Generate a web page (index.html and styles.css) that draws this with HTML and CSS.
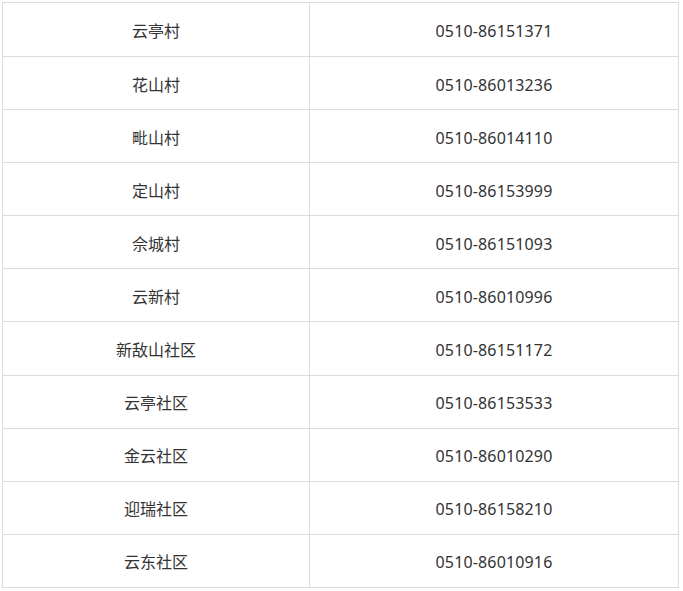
FILE: index.html
```html
<!DOCTYPE html>
<html lang="zh-CN">
<head>
<meta charset="utf-8">
<title>联系电话</title>
<link rel="stylesheet" href="styles.css">
</head>
<body>
<div class="table">
  <div class="cell">云亭村</div><div class="cell num">0510-86151371</div>
  <div class="cell">花山村</div><div class="cell num">0510-86013236</div>
  <div class="cell">毗山村</div><div class="cell num">0510-86014110</div>
  <div class="cell">定山村</div><div class="cell num">0510-86153999</div>
  <div class="cell">佘城村</div><div class="cell num">0510-86151093</div>
  <div class="cell">云新村</div><div class="cell num">0510-86010996</div>
  <div class="cell">新敌山社区</div><div class="cell num">0510-86151172</div>
  <div class="cell">云亭社区</div><div class="cell num">0510-86153533</div>
  <div class="cell">金云社区</div><div class="cell num">0510-86010290</div>
  <div class="cell">迎瑞社区</div><div class="cell num">0510-86158210</div>
  <div class="cell">云东社区</div><div class="cell num">0510-86010916</div>
</div>
</body>
</html>
```
FILE: styles.css
```css
html, body {
  margin: 0;
  padding: 0;
  background: #fff;
}
body {
  padding: 2px 0 0 2px;
  font-family: "Noto Sans", "Noto Sans CJK SC", sans-serif;
  font-size: 16px;
  color: #333;
}
.table {
  display: grid;
  grid-template-columns: 307px 369px;
  grid-template-rows: 54px repeat(10, 53.1px);
  width: 677px;
  box-sizing: border-box;
  border-top: 1px solid #dcdcdc;
  border-left: 1px solid #dcdcdc;
}
.cell {
  display: flex;
  align-items: center;
  justify-content: center;
  box-sizing: border-box;
  border-right: 1px solid #dcdcdc;
  border-bottom: 1px solid #dcdcdc;
  padding-top: 3px;
  line-height: 1.5;
}
.num {
  letter-spacing: 0.15px;
}
```
